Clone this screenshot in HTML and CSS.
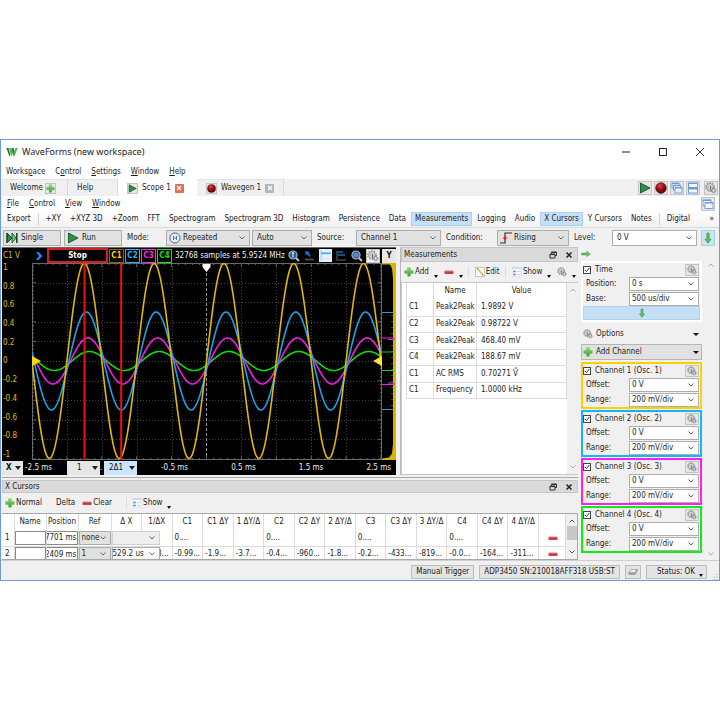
FILE: index.html
```html
<!DOCTYPE html>
<html lang="en">
<head>
<meta charset="utf-8">
<title>WaveForms (new workspace)</title>
<link rel="stylesheet" href="styles.css">
</head>
<body>
<svg class="defs" aria-hidden="true">
  <defs>
    <linearGradient id="green" x1="0" y1="0" x2="0" y2="1"><stop offset="0" stop-color="#8ee06f"/><stop offset="1" stop-color="#2f9e33"/></linearGradient>
    <linearGradient id="red" x1="0" y1="0" x2="0" y2="1"><stop offset="0" stop-color="#ee8080"/><stop offset="1" stop-color="#a80d12"/></linearGradient>
    <radialGradient id="ball" cx=".4" cy=".3" r=".7"><stop offset="0" stop-color="#d84a4a"/><stop offset=".5" stop-color="#961318"/><stop offset="1" stop-color="#4c0508"/></radialGradient>
  </defs>
  <symbol id="gear" viewBox="0 0 12 12">
    <circle cx="5" cy="5" r="3.4" fill="#e4e6e8" stroke="#8b9094" stroke-width="1"/>
    <circle cx="5" cy="5" r="4.4" fill="none" stroke="#8b9094" stroke-width="1.1" stroke-dasharray="1.5 1.26"/>
    <circle cx="4.8" cy="5" r="1.3" fill="#fff" stroke="#777c80" stroke-width=".7"/>
    <circle cx="8.6" cy="8.4" r="1.7" fill="#e4e6e8" stroke="#6f7478" stroke-width=".8"/>
    <circle cx="8.6" cy="8.4" r="2.5" fill="none" stroke="#6f7478" stroke-width=".8" stroke-dasharray="1 .96"/>
    <path d="M5.6 4.2v3.4" stroke="#555" stroke-width=".9"/>
  </symbol>
  <symbol id="plus" viewBox="0 0 10 10"><path d="M3.6.8h2.8v2.8h2.8v2.8H6.4v2.8H3.6V6.4H.8V3.6h2.8z" fill="url(#green)" stroke="#5fb94f" stroke-width=".5"/></symbol>
  <symbol id="minus" viewBox="0 0 10 10"><rect x=".5" y="3.5" width="9" height="3.2" rx=".5" fill="url(#red)"/></symbol>
  <symbol id="down" viewBox="0 0 10 10"><path d="M4.1 1h1.8v5h1.6L5 9.3 2.5 6h1.6z" fill="#6cc35c" stroke="#2f9138" stroke-width=".6"/></symbol>
  <symbol id="right" viewBox="0 0 10 10"><path d="M.5 4h5.300V2.400L9.500 5 5.800 7.600V6H.5z" fill="#6cc35c" stroke="#3d9a45" stroke-width=".5"/></symbol>
  <symbol id="play" viewBox="0 0 12 12"><path d="M1.500 1l9.500 5-9.500 5z" fill="#25944a" stroke="#12401f" stroke-width=".8"/></symbol>
  <symbol id="stopball" viewBox="0 0 12 12"><circle cx="6" cy="6" r="5.400" fill="url(#ball)" stroke="#4a1010" stroke-width=".5"/></symbol>
  <symbol id="float" viewBox="0 0 8 8"><path d="M2.500 2.500v-1.500h5v3.500h-1.500M1 3h5v4H1zM1 3.600h5M2.500 1.500h5" fill="none" stroke="#333" stroke-width="1"/></symbol>
  <symbol id="cross" viewBox="0 0 8 8"><path d="M1.500 1.500l5 5m0-5l-5 5" stroke="#222" stroke-width="1.500"/></symbol>
  <symbol id="list" viewBox="0 0 10 10"><rect x=".3" y=".3" width="9.400" height="9.400" fill="#f4f7fa" stroke="#d9dfe6" stroke-width=".6"/><path d="M0 1h10" stroke="#c7d6e6" stroke-width="1.500"/><path d="M1.500 4.500h2M1.500 7.500h2" stroke="#2f6fd0" stroke-width="1.500"/><path d="M5 4.500h4M5 7.500h4" stroke="#c8cdd4" stroke-width=".8"/></symbol>
  <symbol id="pencil" viewBox="0 0 10 10"><rect x=".5" y=".5" width="9" height="9" fill="#f7f9fb" stroke="#c0c6cc"/><path d="M2.500 1.500l5 6" stroke="#e2b93c" stroke-width="1.400"/><path d="M2 1l1 1.200M7.200 7l1 1.500" stroke="#666" stroke-width="1"/></symbol>
  <symbol id="cascade" viewBox="0 0 12 12"><g fill="#e8f1fd" stroke="#6c9bdc" stroke-width=".9"><rect x="1" y="1" width="7" height="5"/><rect x="2.500" y="3.200" width="7" height="5"/><rect x="4" y="5.500" width="7" height="5.500"/></g><path d="M1 1.500h7M2.500 3.700h7M4 6h7" stroke="#6c9bdc"/></symbol>
  <symbol id="tile" viewBox="0 0 12 12"><g fill="#f2f7fe" stroke="#6c9bdc" stroke-width="1"><rect x="1.500" y="1" width="9" height="4.500"/><rect x="1.500" y="6.500" width="9" height="4.500"/></g><path d="M1 1.500h10M1 6.800h10" stroke="#6c9bdc" stroke-width="1.200"/></symbol>
  <symbol id="windows" viewBox="0 0 12 12"><g fill="#f2f7fe" stroke="#6c9bdc" stroke-width=".9"><rect x="1" y="2" width="8" height="6"/><rect x="3" y="4.500" width="8" height="6"/></g><path d="M1 2.300h8M3 5h8" stroke="#6c9bdc" stroke-width="1.200"/></symbol>
  <symbol id="lens" viewBox="0 0 12 12"><path d="M7.500 7.500l3.500 3.500" stroke="#c9c9c9" stroke-width="1.800"/><circle cx="5" cy="5" r="4" fill="#2a5d9c" stroke="#a8b4c2" stroke-width="1.200"/></symbol>
</svg>

<main class="window">
  <header class="titlebar">
    <svg class="logo" viewBox="0 0 12 10"><path d="M.3 1h2.200l2 7-1 1.500z" fill="#157a3c"/><path d="M3 1h2.200l1.600 5-1.300 3.500z" fill="#57b847"/><path d="M5.500 1h2l1.300 4.500L7.500 9.500z" fill="#157a3c"/><path d="M9.500 1h2.300L8.500 9.500 7.300 7z" fill="#57b847"/></svg>
    <h1>WaveForms (new workspace)</h1>
    <button aria-label="Minimize"><svg viewBox="0 0 10 10"><path d="M1 5h8" stroke="#222"/></svg></button>
    <button aria-label="Maximize"><svg viewBox="0 0 10 10"><rect x="1.500" y="1.500" width="7" height="7" fill="none" stroke="#222"/></svg></button>
    <button aria-label="Close"><svg viewBox="0 0 10 10"><path d="M1 1l8 8M9 1l-8 8" stroke="#222" stroke-width=".9"/></svg></button>
  </header>
  <nav class="menu main-menu">
    <a href="#">Works<u>p</u>ace</a><a href="#">C<u>o</u>ntrol</a><a href="#"><u>S</u>ettings</a><a href="#"><u>W</u>indow</a><a href="#"><u>H</u>elp</a>
  </nav>
  <div class="tabs">
    <div class="tab tab-welcome"><button>Welcome</button><button class="mini" aria-label="Add instrument"><svg><use href="#plus"/></svg></button></div>
    <div class="tab tab-help"><button>Help</button></div>
    <div class="tab tab-scope active"><span class="mini"><svg><use href="#play"/></svg></span><button>Scope 1</button><button class="close hot" aria-label="Close Scope 1"><svg viewBox="0 0 8 8"><path d="M2 2l4 4m0-4l-4 4" stroke="#fff" stroke-width="1.300"/></svg></button></div>
    <div class="tab tab-wavegen"><span class="mini"><svg><use href="#stopball"/></svg></span><button>Wavegen 1</button><button class="close" aria-label="Close Wavegen 1"><svg viewBox="0 0 8 8"><path d="M2 2l4 4m0-4l-4 4" stroke="#fff" stroke-width="1.300"/></svg></button></div>
    <div class="tab-tools">
      <button class="tool" aria-label="Run all"><svg><use href="#play"/></svg></button>
      <button class="tool" aria-label="Stop all"><svg><use href="#stopball"/></svg></button>
      <button class="tool" aria-label="Cascade"><svg><use href="#cascade"/></svg></button>
      <button class="tool" aria-label="Tile"><svg><use href="#tile"/></svg></button>
      <button class="tool" aria-label="Device settings"><svg><use href="#gear"/></svg></button>
    </div>
  </div>
  <nav class="menu sub-menu">
    <a href="#"><u>F</u>ile</a><a href="#"><u>C</u>ontrol</a><a href="#"><u>V</u>iew</a><a href="#"><u>W</u>indow</a>
    <button class="tool push" aria-label="Undock"><svg><use href="#windows"/></svg></button>
  </nav>
  <div class="views">
    <button>Export</button><i></i><button>+XY</button><button>+XYZ 3D</button><button>+Zoom</button><button>FFT</button><button>Spectrogram</button><button>Spectrogram 3D</button><button>Histogram</button><button>Persistence</button><button>Data</button><button class="on">Measurements</button><button>Logging</button><button>Audio</button><button class="on">X Cursors</button><button>Y Cursors</button><button>Notes</button><i></i><button>Digital</button><button class="more" aria-label="More">»</button>
  </div>
  <div class="controls">
    <button class="btn"><svg viewBox="0 0 12 12"><path d="M1 1v10M1 1l5 5-5 5z" fill="#25944a" stroke="#12401f"/><path d="M6 1l4 5-4 5z" fill="#6fbf83" stroke="#12401f" stroke-width=".8"/><path d="M10.800 1v10" stroke="#12401f" stroke-width="1.500"/></svg>Single</button>
    <button class="btn"><svg><use href="#play"/></svg>Run</button>
    <label for="mode" class="lab-mode">Mode:</label>
    <span class="pick pick-mode"><svg viewBox="0 0 12 12"><circle cx="6" cy="6" r="5" fill="#f2f6fb" stroke="#50657e"/><path d="M4.500 3.800v4.400M7.500 3.800v4.400M4.500 6h3" stroke="#3a78c8" stroke-width="1"/></svg><select id="mode"><option>Repeated</option></select></span>
    <select class="pick-auto" aria-label="Trigger mode"><option>Auto</option></select>
    <label for="source" class="lab-source">Source:</label>
    <select id="source" class="pick-source"><option>Channel 1</option></select>
    <label for="cond" class="lab-cond">Condition:</label>
    <span class="pick pick-cond"><svg viewBox="0 0 12 12"><path d="M0 11h5V1h7" fill="none" stroke="#333" stroke-width="1.200"/><path d="M5 3.800l2.400 3H2.600z" fill="#f22"/><path d="M5 6v2" stroke="#f22" stroke-width="1.500"/></svg><select id="cond"><option>Rising</option></select></span>
    <label for="level" class="lab-level">Level:</label>
    <select id="level" class="white pick-level"><option>0 V</option></select>
    <button class="tool lit" aria-label="Expand trigger"><svg><use href="#down"/></svg></button>
  </div>

  <div class="work">
    <div class="left">
      <div class="upper">
        <section class="scope">
          <div class="scope-bar">
            <span class="axis-name">C1 V</span>
            <svg class="go" viewBox="0 0 8 10"><path d="M1 1h2.500L7.500 5 3.500 9H1l3-4z" fill="#2f7df0"/></svg>
            <strong class="state">Stop</strong>
            <button class="ch y">C1</button><button class="ch b">C2</button><button class="ch m">C3</button><button class="ch g">C4</button>
            <span class="samples">32768 samples at 5.9524 MHz</span>
            <span class="bar-icons">
              <svg viewBox="0 0 12 12"><use href="#lens"/><path d="M5 2.500v5M4 3.500l1-1 1 1" stroke="#fff" fill="none"/></svg>
              <svg viewBox="0 0 12 12"><path d="M2 9.500h9" stroke="#444a50" stroke-width="2"/><path d="M2 1l5 1-1.300 1.300 2 2.500L6.500 7 4.300 4.200 3 5.500z" fill="#1f74d8"/></svg>
              <svg class="lit-icon" viewBox="0 0 12 12"><path d="M2 1v10" stroke="#b7d7f2" stroke-width="1.500"/><path d="M2 4h9" stroke="#4da3e8" stroke-width="1.500"/><path d="M2 9h9" stroke="#cfe4f5"/></svg>
              <svg viewBox="0 0 12 12"><path d="M2 2h6M2 5h8" stroke="#1769ac" stroke-width="1.500"/><path d="M2 1v9h9" stroke="#3c444c" stroke-width="1.500" fill="none"/></svg>
              <svg viewBox="0 0 12 12"><use href="#lens"/><path d="M2.500 4h5M2.500 6h5" stroke="#8fb6e0"/></svg>
            </span>
            <button class="tool scope-gear" aria-label="Plot settings"><svg><use href="#gear"/></svg></button>
            <button class="ybtn">Y</button>
          </div>
          <div class="plot-row">
            <ol class="yaxis"><li>1</li><li>0.8</li><li>0.6</li><li>0.4</li><li>0.2</li><li>0</li><li>-0.2</li><li>-0.4</li><li>-0.6</li><li>-0.8</li><li>-1</li></ol>
            <svg class="plot" viewBox="0 0 350 197" preserveAspectRatio="none" role="img" aria-label="Oscilloscope traces">
              <g id="grid"></g><g id="traces"></g>
              <path d="M52.500 0v197M89.200 0v197" stroke="#f01010" stroke-width="2"/>
              <path d="M170.500 1h8v3l-4 5-4-5z" fill="#fff"/>
              <path d="M0 93l9 5-9 5z" fill="#ffd910"/><path d="M350 93l-9 5 9 5z" fill="#ffe23a"/>
            </svg>
            <svg class="histo" viewBox="0 0 14 197" preserveAspectRatio="none" aria-hidden="true">
              <path d="M14 0H0v1.500h8l2 4 1 10v165l-1 10-3 4-7 1v1.500h14z" fill="#d8b400"/>
              <path d="M0 49.500h12M0 146.500h12" stroke="#1ea0dc"/><path d="M0 75h12v1.500H6M0 121.500h12V120H6" stroke="#f01ee6" fill="none"/><path d="M0 89h12M0 107.500h12" stroke="#0bd60b"/>
              <path d="M10 52v92" stroke="#3aa0d0" stroke-width="1" stroke-dasharray="1 5"/>
            </svg>
          </div>
          <div class="xaxis">
            <button class="drop"><b>X</b><span></span></button><span class="first">-2.5 ms</span>
            <button class="drop wide">1<span></span></button><span class="dot">.</span><button class="drop wide sel">2Δ1<span></span></button>
            <div class="ticks"><span>-0.5 ms</span><span>0.5 ms</span><span>1.5 ms</span><span>2.5 ms</span></div>
          </div>
        </section>

        <section class="measure">
          <div class="dock-title"><h2>Measurements</h2><button aria-label="Float measurements"><svg><use href="#float"/></svg></button><button aria-label="Close measurements"><svg><use href="#cross"/></svg></button></div>
          <div class="dock-tools">
            <button><svg><use href="#plus"/></svg>Add<i class="tri"></i></button>
            <button aria-label="Remove"><svg><use href="#minus"/></svg><i class="tri"></i></button>
            <i class="rule"></i>
            <button><svg><use href="#pencil"/></svg>Edit</button>
            <i class="rule"></i>
            <button><svg><use href="#list"/></svg>Show<i class="tri"></i></button>
            <button aria-label="Measurement settings"><svg><use href="#gear"/></svg><i class="tri"></i></button>
          </div>
          <div class="measure-body">
            <table>
              <thead><tr><th class="c-ch"></th><th class="c-name">Name</th><th>Value</th></tr></thead>
              <tbody>
                <tr><td>C1</td><td>Peak2Peak</td><td>1.9892 V</td></tr>
                <tr><td>C2</td><td>Peak2Peak</td><td>0.98722 V</td></tr>
                <tr><td>C3</td><td>Peak2Peak</td><td>468.40 mV</td></tr>
                <tr><td>C4</td><td>Peak2Peak</td><td>188.67 mV</td></tr>
                <tr><td>C1</td><td>AC RMS</td><td>0.70271 Ṽ</td></tr>
                <tr><td>C1</td><td>Frequency</td><td>1.0000 kHz</td></tr>
              </tbody>
            </table>
            <div class="scroll"><svg viewBox="0 0 8 6"><path d="M1.500 4.500L4 2l2.500 2.500" fill="none" stroke="#aaa"/></svg><svg viewBox="0 0 8 6"><path d="M1.500 1.500L4 4l2.500-2.500" fill="none" stroke="#aaa"/></svg></div>
          </div>
        </section>
      </div>

      <section class="cursors">
        <div class="dock-title"><h2>X Cursors</h2><button aria-label="Float cursors"><svg><use href="#float"/></svg></button><button aria-label="Close cursors"><svg><use href="#cross"/></svg></button></div>
        <div class="dock-tools cursor-tools">
          <button><svg><use href="#plus"/></svg>Normal</button>
          <button>Delta</button>
          <button><svg><use href="#minus"/></svg>Clear</button>
          <i class="rule"></i>
          <button><svg><use href="#list"/></svg>Show<i class="tri"></i></button>
        </div>
        <div class="cursor-body">
          <table>
            <colgroup><col class="k-num"><col class="k-name"><col class="k-name"><col class="k-ref"><col span="14"><col class="k-del"></colgroup>
            <thead><tr><th></th><th>Name</th><th><div class="clip"><span>Position</span></div></th><th>Ref</th><th>Δ X</th><th>1/ΔX</th><th>C1</th><th>C1 ΔY</th><th>1 ΔY/Δ</th><th>C2</th><th>C2 ΔY</th><th>2 ΔY/Δ</th><th>C3</th><th>C3 ΔY</th><th>3 ΔY/Δ</th><th>C4</th><th>C4 ΔY</th><th>4 ΔY/Δ</th><th></th></tr></thead>
            <tbody>
              <tr><td>1</td><td><input aria-label="Name 1"></td><td><input class="pos" aria-label="Position 1" value="-1.7701 ms"></td><td><select aria-label="Reference 1"><option>none</option></select></td><td><select class="over" disabled aria-label="Delta X 1"><option></option></select></td><td></td><td>0....</td><td></td><td></td><td>0....</td><td></td><td></td><td>0....</td><td></td><td></td><td>0....</td><td></td><td></td><td><button aria-label="Remove cursor 1"><svg><use href="#minus"/></svg></button></td></tr>
              <tr><td>2</td><td><input aria-label="Name 2"></td><td><input class="pos" aria-label="Position 2" value="-1.2409 ms"></td><td><select aria-label="Reference 2"><option>1</option></select></td><td><select class="over white" aria-label="Delta X 2"><option>529.2 us</option></select></td><td class="tail">8...</td><td>-0.99...</td><td>-1.9...</td><td>-3.7...</td><td>-0.4...</td><td>-960...</td><td>-1.8...</td><td>-0.2...</td><td>-433...</td><td>-819...</td><td>-0.0...</td><td>-164...</td><td>-311...</td><td><button aria-label="Remove cursor 2"><svg><use href="#minus"/></svg></button></td></tr>
            </tbody>
          </table>
          <div class="scroll"><svg viewBox="0 0 8 6"><path d="M1.500 4.500L4 2l2.500 2.500" fill="none" stroke="#555"/></svg><i class="thumb"></i><svg viewBox="0 0 8 6"><path d="M1.500 1.500L4 4l2.500-2.500" fill="none" stroke="#555"/></svg></div>
        </div>
      </section>
    </div>

    <aside class="side">
      <div class="side-list">
        <button class="collapse" aria-label="Collapse panel"><svg><use href="#right"/></svg></button>
        <fieldset class="card time">
          <div class="head"><input type="checkbox" id="time" checked><label for="time">Time</label><button class="tool" aria-label="Time settings"><svg><use href="#gear"/></svg></button></div>
          <div class="field"><label for="tp">Position:</label><select id="tp" class="white"><option>0 s</option></select></div>
          <div class="field"><label for="tb">Base:</label><select id="tb" class="white"><option>500 us/div</option></select></div>
          <button class="expand" aria-label="More time options"><svg><use href="#down"/></svg></button>
        </fieldset>
        <button class="line"><svg><use href="#gear"/></svg>Options<i class="tri"></i></button>
        <button class="line raised"><svg><use href="#plus"/></svg>Add Channel<i class="tri"></i></button>
        <fieldset class="card c1">
          <div class="head"><input type="checkbox" id="k1" checked><label for="k1">Channel 1 (Osc. 1)</label><button class="tool" aria-label="Channel 1 settings"><svg><use href="#gear"/></svg></button></div>
          <div class="field"><label for="o1">Offset:</label><select id="o1" class="white"><option>0 V</option></select></div>
          <div class="field"><label for="r1">Range:</label><select id="r1" class="white"><option>200 mV/div</option></select></div>
        </fieldset>
        <fieldset class="card c2">
          <div class="head"><input type="checkbox" id="k2" checked><label for="k2">Channel 2 (Osc. 2)</label><button class="tool" aria-label="Channel 2 settings"><svg><use href="#gear"/></svg></button></div>
          <div class="field"><label for="o2">Offset:</label><select id="o2" class="white"><option>0 V</option></select></div>
          <div class="field"><label for="r2">Range:</label><select id="r2" class="white"><option>200 mV/div</option></select></div>
        </fieldset>
        <fieldset class="card c3">
          <div class="head"><input type="checkbox" id="k3" checked><label for="k3">Channel 3 (Osc. 3)</label><button class="tool" aria-label="Channel 3 settings"><svg><use href="#gear"/></svg></button></div>
          <div class="field"><label for="o3">Offset:</label><select id="o3" class="white"><option>0 V</option></select></div>
          <div class="field"><label for="r3">Range:</label><select id="r3" class="white"><option>200 mV/div</option></select></div>
        </fieldset>
        <fieldset class="card c4">
          <div class="head"><input type="checkbox" id="k4" checked><label for="k4">Channel 4 (Osc. 4)</label><button class="tool" aria-label="Channel 4 settings"><svg><use href="#gear"/></svg></button></div>
          <div class="field"><label for="o4">Offset:</label><select id="o4" class="white"><option>0 V</option></select></div>
          <div class="field"><label for="r4">Range:</label><select id="r4" class="white"><option>200 mV/div</option></select></div>
        </fieldset>
      </div>
      <div class="scroll side-scroll"><svg viewBox="0 0 8 6"><path d="M1.500 4.500L4 2l2.500 2.500" fill="none" stroke="#aaa"/></svg><svg viewBox="0 0 8 6"><path d="M1.500 1.500L4 4l2.500-2.500" fill="none" stroke="#aaa"/></svg></div>
    </aside>
  </div>

  <footer class="status">
    <button>Manual Trigger</button>
    <button>ADP3450 SN:210018AFF318 USB:ST</button>
    <button aria-label="Clear log"><svg viewBox="0 0 12 10"><path d="M3.500 2h7.500L8.500 6H1z" fill="#eee" stroke="#888" stroke-width=".7"/><path d="M1 6v2h7.500l2.500-4V2L8.500 6z" fill="#aaa" stroke="#888" stroke-width=".7"/></svg></button>
    <button class="ok">Status: OK<i class="tri"></i></button>
    <svg class="grip" viewBox="0 0 6 6"><path d="M5 0v1M5 2.500v1M5 5v1M2.500 2.500v1M2.500 5v1M0 5v1" stroke="#aaa" stroke-width="1"/></svg>
  </footer>
</main>
<script src="script.js"></script>
</body>
</html>
```
FILE: styles.css
```css
* { box-sizing: border-box; }
body {
  margin: 0;
  padding-top: 139px;
  background: #fff;
  color: #1c1c1c;
  font: 8px/12px "DejaVu Sans Condensed", "Noto Sans", sans-serif;
}
button, input, select { font: inherit; color: inherit; margin: 0; }
button { border: 0; padding: 0; background: none; white-space: nowrap; }
a { color: inherit; text-decoration: none; }
h1, h2 { margin: 0; font-weight: normal; }
svg { display: block; flex: none; width: 12px; height: 12px; }
.defs { position: absolute; width: 0; height: 0; }
label, span { white-space: nowrap; }

select {
  appearance: none;
  height: 16px;
  padding: 0 10px 0 4px;
  border: 1px solid #adadad;
  border-radius: 0;
  background: #e1e1e1 url("data:image/svg+xml,%3Csvg xmlns='http://www.w3.org/2000/svg' viewBox='0 0 6 4'%3E%3Cpath d='M.5.5L3 3 5.500.5' fill='none' stroke='%23555' stroke-width='.9'/%3E%3C/svg%3E") no-repeat right 4px center / 6px 4px;
}
select.white { background-color: #fff; }

.window { border: 1px solid #6f9bdd; background: #f0f0f0; }
.titlebar { display: flex; align-items: center; height: 24px; padding: 0 14px 0 5px; background: #fff; }
.titlebar h1 { flex: 1; font: 9px/12px "Noto Sans", sans-serif; }
.titlebar button { margin-left: 27px; }
.titlebar button svg { width: 10px; height: 10px; }
.logo { height: 10px; margin-right: 4px; }

.menu { display: flex; align-items: center; gap: 10px; height: 15px; padding: 0 4px 0 5px; background: #fff; }
.menu u { text-underline-offset: 1px; }
.sub-menu { border-left: 1px solid #f0f0f0; }
.push { margin-left: auto; }
.tool { display: grid; place-items: center; width: 14px; height: 14px; border: 1px solid #c4c4c4; background: #e6e6e6; }
.tool.lit { height: 16px; background: #cce4f7; border-color: #a8cdea; }
.tool svg { width: 12px; height: 12px; }

.tabs { display: flex; height: 17px; padding-left: 1px; }
.tab { display: flex; align-items: center; gap: 4px; border-right: 1px solid #d9d9d9; border-top: 1px solid #e2e2e2; }
.tab.active { background: #fff; border-color: #fff; }
.tab-welcome { width: 66px; padding-left: 8px; gap: 2px; }
.tab-help { width: 50px; padding-left: 9px; }
.tab-scope { width: 79px; padding-left: 9px; }
.tab-wavegen { width: 87px; padding-left: 9px; }
.mini { display: grid; place-items: center; width: 11px; height: 11px; border: 1px solid #c4c4c4; background: #e9e9e9; }
.mini svg { width: 9px; height: 9px; }
.close { display: grid; place-items: center; width: 9px; height: 9px; border-radius: 1px; background: #b5b5b5; }
.close.hot { background: #e46c50; }
.close svg { width: 8px; height: 8px; }
.tab-tools { display: flex; align-items: center; gap: 2px; margin-left: auto; padding-right: 1px; }
.tab-tools .tool:last-child { margin-left: 2px; }

.views { display: flex; align-items: center; gap: 1px; height: 16px; padding: 0 4px 0 2px; background: linear-gradient(#fff, #f2f2f2); }
.views button { height: 14px; padding: 0 3px; border: 1px solid transparent; }
.views .on { background: #c6e0f7; border-color: #a8d0f0; }
.views i { width: 1px; height: 12px; margin: 0 2px; background: #d4d4d4; }
.views .more { padding: 0; margin-left: auto; }

.controls { display: flex; align-items: center; height: 20px; padding: 0 4px 0 2px; border-top: 1px solid #dcdcdc; }
.btn { display: flex; align-items: center; gap: 3px; width: 58px; height: 16px; margin-right: 3px; padding-left: 2px; border: 1px solid #adadad; background: #e1e1e1; }
.lab-mode { width: 41px; padding-left: 2px; }
.lab-source { width: 41px; padding-left: 2px; margin-left: 3px; }
.lab-cond { width: 53px; padding-left: 2px; margin-left: 3px; }
.lab-level { width: 40px; padding-left: 2px; margin-left: 3px; }
.pick { position: relative; display: flex; }
.pick svg { position: absolute; left: 3px; top: 2px; width: 12px; height: 12px; pointer-events: none; }
.pick select { width: 100%; padding-left: 16px; }
.pick-mode { flex: 1 1 84px; margin-right: 2px; }
.pick-auto { flex: 1 1 60px; }
.pick-source { flex: 1 1 85px; }
.pick-cond { flex: 1 1 72px; }
.pick-level { flex: 1 1 85px; margin-right: 4px; }
.pick-auto, .pick-source, .pick-level { min-width: 0; }

.work { display: flex; border-bottom: 1px solid #cfcfcf; margin-bottom: 2px; }
.left { flex: 1; min-width: 0; padding-left: 1px; }
.upper { display: flex; gap: 4px; margin-bottom: 2px; border-bottom: 1px solid #a8a8a8; padding-bottom: 2px; }
.scope { flex: 1; min-width: 0; background: #000; color: #eee; border-top: 1px solid #666; }
.scope-bar { display: flex; align-items: center; height: 15px; }
.axis-name { width: 33px; padding-left: 1px; color: #e0bd00; }
.go { width: 8px; height: 10px; margin-right: 4px; }
.state { width: 61px; height: 15px; margin-right: 1px; border: 2px solid #d81c1c; text-align: center; line-height: 11px; color: #fff; }
.ch { width: 15px; height: 14px; margin-right: 1px; border: 1px solid; font-weight: bold; }
.ch.y { color: #ffd200; border-color: #806a10; }
.ch.b { color: #1eb4ff; }
.ch.m { color: #ff28f0; }
.ch.g { color: #10e010; }
.samples { padding-left: 2px; }
.bar-icons { display: flex; flex: 1; align-items: center; justify-content: space-evenly; }
.bar-icons svg { width: 12px; height: 12px; }
.bar-icons .lit-icon { width: 13px; height: 13px; background: #e4f2fc; }
.scope-gear { height: 14px; background: #eee; margin-right: 2px; }
.ybtn { width: 14px; height: 14px; background: #e6e6e6; color: #111; font-weight: bold; }
.plot-row { display: flex; }
.yaxis { display: flex; flex-direction: column; justify-content: space-between; width: 30px; margin: 0; padding: 0 0 0 1px; list-style: none; color: #e0bd00; }
.yaxis li { line-height: 10px; }
.plot { flex: 1; min-width: 0; width: auto; height: 197px; }
.histo { width: 14px; height: 197px; }
.xaxis { display: flex; align-items: center; height: 15px; }
.drop { display: flex; align-items: center; justify-content: space-between; width: 21px; height: 14px; padding: 0 2px 0 4px; background: #e6e6e6; color: #111; }
.drop.wide { width: 33px; padding-left: 10px; }
.drop.sel { padding-left: 5px; background: #cce4f7; }
.drop span { border: 3px solid transparent; border-top: 4px solid #222; border-bottom: 0; }
.first { width: 44px; padding-left: 2px; }
.dot { width: 4px; }
.ticks { flex: 1; display: flex; justify-content: space-between; padding: 0 5px 0 24px; }

.measure { display: flex; flex-direction: column; width: 178px; border-left: 1px solid #b8b8b8; }
.dock-title { display: flex; align-items: center; gap: 8px; height: 15px; padding: 0 4px 0 2px; border: 1px solid #c6c6c6; background: #dadada; }
.dock-title h2 { flex: 1; font-size: 8px; }
.dock-title svg { width: 8px; height: 8px; }
.dock-tools { display: flex; align-items: center; justify-content: space-between; height: 20px; padding: 0 2px 0 3px; }
.dock-tools button { display: flex; align-items: center; gap: 1px; }
.dock-tools svg { width: 10px; height: 10px; }
.rule { width: 1px; height: 12px; background: #dcdcdc; }
.tri { border: 3px solid transparent; border-top: 3px solid #111; border-bottom: 0; }
.dock-tools .tri, .ok .tri { border-width: 3px 2px 0; margin: 8px 0 0 4px; }
.measure-body { display: flex; flex: 1; border: 1px solid #c8c8c8; border-right: 0; background: #fff; }
.measure table { flex: 1; align-self: flex-start; margin-left: 4px; border-collapse: collapse; table-layout: fixed; width: 0; }
.measure th, .measure td { height: 17px; padding: 0 0 0 2px; border: 1px solid #dcdcdc; border-width: 0 1px 1px; font-weight: normal; text-align: left; white-space: nowrap; }
.measure tbody tr:nth-child(even) td { height: 16px; }
.measure th { height: 16px; padding: 0; border-bottom: 0; text-align: center; }
.measure td:last-child { padding-left: 4px; }
.c-ch { width: 27px; }
.c-name { width: 43px; }
.scroll { display: flex; flex-direction: column; justify-content: space-between; align-items: center; width: 11px; padding: 4px 0; background: #f0f0f0; }
.scroll svg { width: 8px; height: 6px; }

.cursors .dock-title { height: 13px; }
.cursor-tools { justify-content: flex-start; gap: 14px; height: 20px; }
.cursor-tools button:nth-of-type(3) { margin-left: -7px; }
.cursor-tools .rule { margin-right: -9px; }
.cursor-body { display: flex; height: 47px; border: 1px solid #a8a8a8; border-left: 0; background: #fff; overflow: hidden; }
.cursor-body table { flex: 1; width: 0; align-self: flex-start; border-collapse: collapse; table-layout: fixed; }
.cursor-body th, .cursor-body td { height: 16px; padding: 0; border-right: 1px solid #dcdcdc; font-weight: normal; text-align: center; white-space: nowrap; }
.cursor-body td { text-align: left; border-bottom: 1px solid #dcdcdc; padding-left: 2px; }
.cursor-body td:nth-child(-n+5) { padding-left: 0; }
.cursor-body td:first-child { padding-left: 3px; }
.cursor-body td.tail { padding-left: 15px; }
.k-num { width: 12px; }
.k-name { width: 32px; }
.k-ref { width: 33px; }
.k-del { width: 27px; }
.clip { display: flex; justify-content: center; overflow: hidden; }
.cursor-body input { display: block; width: 100%; height: 14px; padding: 0; border: 1px solid #8a8a8a; border-radius: 0; background: #fff; }
.cursor-body input.pos { text-indent: -11px; border-left: 0; }
.cursor-body select { display: block; width: 100%; height: 14px; padding-left: 2px; }
.cursor-body select.over { position: relative; width: 48px; padding-left: 0; }
.cursor-body select:disabled { background-color: #eee; border-color: #d0d0d0; opacity: 1; }
.cursor-body td button { display: block; margin: 0 auto; }
.cursor-body td button svg { width: 10px; height: 10px; }
.thumb { width: 10px; height: 14px; background: #c8c8c8; margin-bottom: 8px; }

.side { display: flex; width: 141px; padding-left: 3px; }
.side-list { flex: 1; display: flex; flex-direction: column; gap: 1px; }
.collapse { height: 13px; align-self: flex-start; }
.collapse svg { width: 10px; height: 10px; }
.card { margin: 0; padding: 0; border: 2px solid; min-width: 0; }
.time { border-color: #fff; margin-bottom: 3px; }
.c1 { border-color: #ffd000; }
.c2 { border-color: #14b4ff; }
.c3 { border-color: #ff1ef5; }
.c4 { border-color: #0af014; }
.head { display: flex; align-items: center; height: 13px; gap: 4px; }
.head label { flex: 1; }
.head .tool { height: 12px; margin-right: 1px; }
.head .tool svg { width: 10px; height: 10px; }
.head input { appearance: none; width: 8px; height: 8px; border: 1px solid #444; background: #fff url("data:image/svg+xml,%3Csvg xmlns='http://www.w3.org/2000/svg' viewBox='0 0 6 6'%3E%3Cpath d='M.8 3l1.600 1.600L5.300 1' fill='none' stroke='%23222' stroke-width='.9'/%3E%3C/svg%3E") center / 6px 6px; }
.field { display: grid; grid-template-columns: 46px 1fr; align-items: center; height: 15px; padding-right: 1px; }
.field label { padding-left: 3px; }
.field select { width: 100%; height: 14px; padding-left: 2px; }
.expand { display: grid; place-items: center; width: 100%; height: 14px; background: #c2dff5; border: 1px solid #b0d2ec; }
.expand svg { width: 10px; height: 10px; }
.line { display: flex; align-items: center; gap: 3px; height: 16px; padding: 0 3px 0 2px; margin-bottom: 1px; }
.line svg { width: 10px; height: 10px; }
.line .tri { margin-left: auto; }
.raised { border: 1px solid #b5b5b5; background: #e1e1e1; padding: 0 2px 0 1px; }
.side-scroll { width: 17px; padding: 15px 0 3px; }

.status { display: flex; justify-content: flex-end; align-items: center; gap: 5px; height: 17px; padding-right: 1px; }
.status button { display: flex; align-items: center; justify-content: center; height: 14px; padding: 0 4px; border: 1px solid #bdbdbd; background: #e4e4e4; }
.status button svg { width: 10px; height: 10px; }
.status button:nth-child(3) { padding: 0 2px; }
.status .ok { padding: 0 3px 0 10px; }
.grip { width: 6px; height: 6px; align-self: flex-end; }
```
FILE: script.js
```js
const W = 350, H = 197, MID = 98, PERIOD = 69.8, TRIGGER = 174.5;

function lineArt(d, stroke, width, dash) {
  const p = document.createElementNS("http://www.w3.org/2000/svg", "path");
  p.setAttribute("d", d);
  p.setAttribute("fill", "none");
  p.setAttribute("stroke", stroke);
  p.setAttribute("stroke-width", width);
  if (dash) p.setAttribute("stroke-dasharray", dash);
  return p;
}

// Graticule: ten divisions each way, with small ticks on the frame
const grid = document.getElementById("grid");
let lines = "", ticks = "";
for (let i = 1; i < 10; i++) {
  const x = Math.round(i * 34.9) + 0.5, y = Math.round(i * 19.6) + 0.5;
  if (i !== 5) lines += `M${x} 0V${H}`;
  lines += `M0 ${y}H${W}`;
}
for (let i = 0; i <= 50; i++) {
  const x = i * 6.98, y = i * 3.92, n = i % 5 ? 2 : 4;
  ticks += `M${x} 0v${n}M${x} ${H}v-${n}M0 ${y}h${n}M${W} ${y}h-${n}`;
}
grid.append(
  lineArt(lines, "#454545", 1, "1 2"),
  lineArt(`M${TRIGGER} 0V${H}`, "#999", 1, "3 2"),
  lineArt(ticks, "#666", 1),
  lineArt(`M.5 .5H349.500V196.500H.5z`, "#6a6a6a", 1)
);

// Channel traces: amplitude in pixels and lag behind the trigger
const channels = [
  { amp: 9.5, lag: 5, color: "#0be00b" },
  { amp: 23, lag: 3.5, color: "#f01ee6" },
  { amp: 49, lag: 2, color: "#1ea0e6" },
  { amp: 97.5, lag: 0, color: "#e0b80a" }
];
const traces = document.getElementById("traces");
for (const c of channels) {
  let d = "";
  for (let x = 0; x <= W; x++) {
    const y = MID - c.amp * Math.sin((2 * Math.PI * (x - TRIGGER - c.lag)) / PERIOD);
    d += `${x ? "L" : "M"}${x} ${y.toFixed(2)}`;
  }
  traces.append(lineArt(d, c.color, 1.6));
}
```
